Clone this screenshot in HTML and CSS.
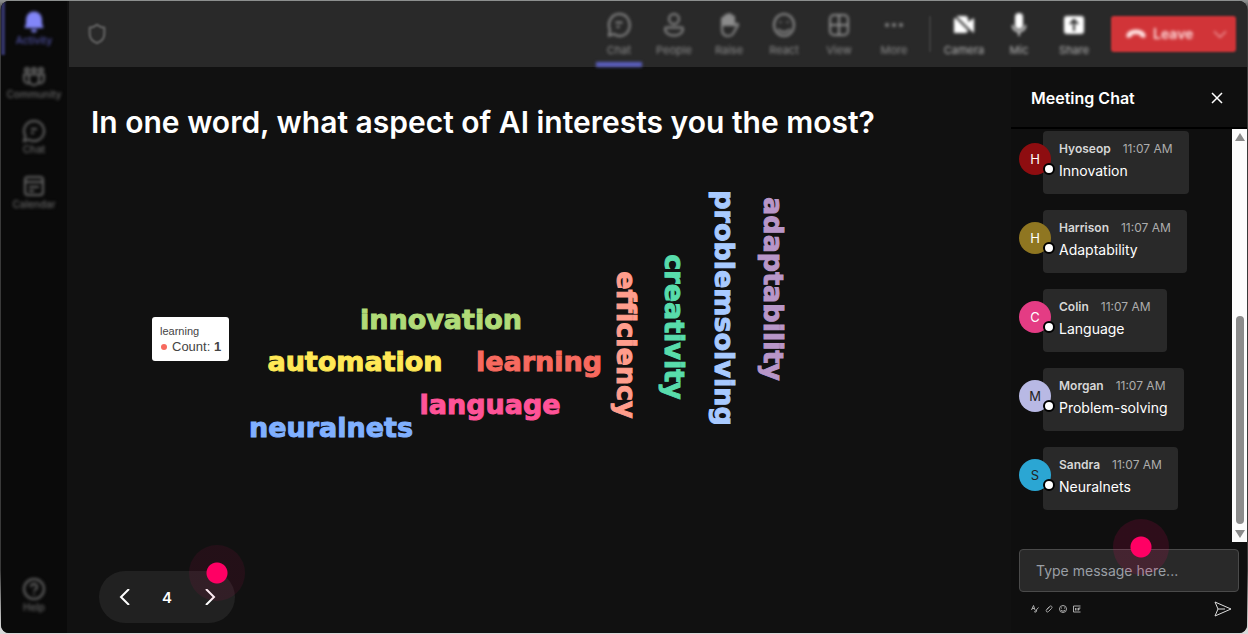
FILE: index.html
```
<!DOCTYPE html>
<html lang="en">
<head>
<meta charset="utf-8">
<title>Meeting Chat</title>
<link rel="stylesheet" href="styles.css">
</head>
<body>
<div class="app">
	<nav class="rail">
		<a class="rail-item active" href="#">
			<svg viewBox="0 0 24 24" width="24" height="24"><path d="M12 1.500a8 8 0 0 0-8 8v4l-1.500 4.500h19L20 13.500v-4a8 8 0 0 0-8-8zM9 19.500a3 3 0 0 0 6 0z" fill="currentColor"/></svg>
			<span>Activity</span>
		</a>
		<a class="rail-item" href="#">
			<svg viewBox="0 0 24 24" width="24" height="24"><circle cx="5" cy="6" r="2"/><circle cx="12" cy="6" r="2"/><circle cx="19" cy="6" r="2"/><path d="M7 10.500h10V16a5 5 0 0 1-10 0zM7 10.500H2V15a4 4 0 0 0 5.500 4M17 10.500h5V15a4 4 0 0 1-5.500 4"/></svg>
			<span>Community</span>
		</a>
		<a class="rail-item" href="#">
			<svg viewBox="0 0 24 24" width="24" height="24"><path d="M12 2a10 10 0 1 1-5 18.600L2 22l1.400-5A10 10 0 0 1 12 2zM9 10h6M9 14h3"/></svg>
			<span>Chat</span>
		</a>
		<a class="rail-item" href="#">
			<svg viewBox="0 0 24 24" width="24" height="24"><rect x="3" y="3" width="18" height="18" rx="3"/><path d="M3 8h18M7 13h10M7 17h5"/></svg>
			<span>Calendar</span>
		</a>
		<a class="rail-item help" href="#">
			<svg viewBox="0 0 24 24" width="24" height="24"><circle cx="12" cy="12" r="10"/><path d="M9 10a3 3 0 1 1 4.500 2.500c-1 .6-1.500 1-1.500 2M12 16.500v1.500"/></svg>
			<span>Help</span>
		</a>
	</nav>

	<div class="main">
		<header class="topbar">
			<svg class="shield" viewBox="0 0 24 24" width="22" height="22"><path d="M12 2c2.500 2 5 3 8 3v7c0 5-3 8-8 10-5-2-8-5-8-10V5c3 0 5.500-1 8-3z"/></svg>
			<div class="tools">
				<button class="tool selected" type="button">
					<svg viewBox="0 0 24 24" width="24" height="24"><path d="M12 1a10 11 0 1 1-5 20L2 22.500l1-5.500A10 11 0 0 1 12 1zM8.500 9.500h7M9.500 14h3"/></svg>
					<span>Chat</span>
				</button>
				<button class="tool" type="button">
					<svg viewBox="0 0 24 24" width="24" height="24"><circle cx="12" cy="6" r="5"/><path d="M4 14.500h16c1 0 1 1 1 1.500 0 4-4 6.500-9 6.500S3 20 3 16c0-.5 0-1.500 1-1.500z"/></svg>
					<span>People</span>
				</button>
				<button class="tool" type="button">
					<svg viewBox="0 0 24 24" width="24" height="24"><path d="M5 12V6a1.500 1.500 0 0 1 3 0V3.500a1.500 1.500 0 0 1 3 0V2.500a1.500 1.500 0 0 1 3 0v2a1.500 1.500 0 0 1 3 0V12z" fill="currentColor"/><path d="M5 12v4c0 4 2 7 6 7 3 0 5-1.500 6-4l4-6.800c.5-1.200-1-2-2-1.200L17 13"/></svg>
					<span>Raise</span>
				</button>
				<button class="tool" type="button">
					<svg viewBox="0 0 24 24" width="24" height="24"><ellipse cx="12" cy="12" rx="10" ry="11"/><path d="M8.500 8.500v1.500M15.500 8.500v1.500M6 16c3 4 9 4 12 0"/></svg>
					<span>React</span>
				</button>
				<button class="tool" type="button">
					<svg viewBox="0 0 24 24" width="24" height="24"><rect x="3" y="2" width="18" height="20" rx="4"/><path d="M12 2v20M3 12h18"/></svg>
					<span>View</span>
				</button>
				<button class="tool" type="button">
					<svg viewBox="0 0 24 24" width="24" height="24"><g fill="currentColor" stroke="none"><circle cx="5" cy="12" r="2"/><circle cx="12" cy="12" r="2"/><circle cx="19" cy="12" r="2"/></g></svg>
					<span>More</span>
				</button>
			</div>
			<div class="tools devices">
				<button class="tool" type="button">
					<svg viewBox="0 0 24 24" width="24" height="24"><path d="M5 3h8a3 3 0 0 1 3 3v3l6-4v15l-6-4v1a3 3 0 0 1-3 3H2V6z" fill="currentColor" stroke="none"/><path d="M2 2l20 20" stroke="#292929"/></svg>
					<span>Camera</span>
				</button>
				<button class="tool" type="button">
					<svg viewBox="0 0 24 24" width="24" height="24"><rect x="8" y="0" width="8" height="16" rx="4" fill="currentColor" stroke="none"/><path d="M5.500 12a6.500 6.500 0 0 0 13 0M12 19v4" stroke-width="1.500"/></svg>
					<span>Mic</span>
				</button>
				<button class="tool" type="button">
					<svg viewBox="0 0 24 24" width="24" height="24"><rect x="2" y="3" width="20" height="18" rx="3" fill="currentColor" stroke="none"/><path d="M12 18V7M8 11l4-4 4 4" stroke="#292929"/></svg>
					<span>Share</span>
				</button>
			</div>
			<button class="leave" type="button">
				<svg viewBox="0 0 24 24" width="22" height="22"><path d="M12 7C6 7 1.500 10 1.500 13.500c0 2 .8 2.800 2.500 2.500l2.500-.6c1-.3 1.300-1 1.200-2.400 2.600-1 6-1 8.600 0-.1 1.400.2 2.100 1.200 2.400l2.500.6c1.700.3 2.500-.5 2.500-2.500C22.500 10 18 7 12 7z" fill="currentColor"/></svg>
				<span>Leave</span>
				<svg class="caret" viewBox="0 0 24 24" width="16" height="16"><path d="M3 8l9 9 9-9"/></svg>
			</button>
		</header>

		<div class="content">
			<main class="stage">
				<h1>In one word, what aspect of AI interests you the most?</h1>
				<div class="cloud">
					<svg viewBox="0 0 800 320" width="800" height="320">
						<text x="350" y="189" color="#b0db78">innovation</text>
						<text x="264" y="231" color="#ffe856">automation</text>
						<text x="448" y="231" color="#f76a5f">learning</text>
						<text x="399" y="274" color="#ff5397">language</text>
						<text x="240" y="297" color="#80b0ff">neuralnets</text>
						<text transform="translate(526 205) rotate(90)" color="#ff9d8c">efficiency</text>
						<text transform="translate(574 187) rotate(90)" color="#58dcab">creativity</text>
						<text transform="translate(624 168) rotate(90)" color="#a8caff">problemsolving</text>
						<text transform="translate(673 149) rotate(90)" color="#b896c8">adaptability</text>
					</svg>
					<div class="tip">
						<div class="tip-title">learning</div>
						<div class="tip-row"><i></i>Count: <b>1</b></div>
					</div>
				</div>
				<div class="pager">
					<button type="button" aria-label="Previous"><svg viewBox="0 0 16 16" width="16" height="16"><path d="M13 0L5 8l8 8"/></svg></button>
					<span>4</span>
					<button type="button" aria-label="Next"><svg viewBox="0 0 16 16" width="16" height="16"><path d="M4 0l8 8-8 8"/></svg></button>
					<div class="pulse"></div>
				</div>
			</main>

			<aside class="chat">
				<div class="chat-head">
					<h2>Meeting Chat</h2>
					<button type="button" aria-label="Close"><svg viewBox="0 0 12 12" width="12" height="12"><path d="M1 1l10 10M11 1L1 11"/></svg></button>
				</div>
				<div class="chat-body">
					<ul class="messages">
						<li><div class="avatar red">H</div><div class="bubble"><b>Hyoseop</b><time>11:07 AM</time><p>Innovation</p></div></li>
						<li><div class="avatar olive">H</div><div class="bubble"><b>Harrison</b><time>11:07 AM</time><p>Adaptability</p></div></li>
						<li><div class="avatar pink">C</div><div class="bubble"><b>Colin</b><time>11:07 AM</time><p>Language</p></div></li>
						<li><div class="avatar lilac">M</div><div class="bubble"><b>Morgan</b><time>11:07 AM</time><p>Problem-solving</p></div></li>
						<li><div class="avatar blue">S</div><div class="bubble"><b>Sandra</b><time>11:07 AM</time><p>Neuralnets</p></div></li>
					</ul>
					<div class="scrollbar">
						<svg viewBox="0 0 10 8" width="10" height="8"><path d="M5 0l5 8H0z"/></svg>
						<div class="track"><div class="thumb"></div></div>
						<svg viewBox="0 0 10 8" width="10" height="8"><path d="M0 0h10L5 8z"/></svg>
					</div>
				</div>
				<form class="composer">
					<input type="text" placeholder="Type message here..." aria-label="Message">
					<div class="pulse"></div>
					<div class="composer-tools">
						<button type="button" aria-label="Format"><svg viewBox="0 0 16 16" width="8" height="8"><path d="M1 10L5 1l3 9M2 7h5M7 14l8-9M7 14c3 1 5-1 4-4"/></svg></button>
						<button type="button" aria-label="Attach"><svg viewBox="0 0 16 16" width="8" height="8"><path d="M3 9l6-6c3-3 7 1 4 4l-6 6c-3 3-6-1-4-3l6-6"/></svg></button>
						<button type="button" aria-label="Emoji"><svg viewBox="0 0 16 16" width="8" height="8"><circle cx="8" cy="8" r="7"/><path d="M5 5v2M11 5v2M4 10c2 3 6 3 8 0"/></svg></button>
						<button type="button" aria-label="GIF"><svg viewBox="0 0 16 16" width="8" height="8"><path d="M15 2H1v12h14M5 6v5M8 6v5M15 6h-4v5M11 8h3"/></svg></button>
						<button class="send" type="submit" aria-label="Send"><svg viewBox="0 0 18 16" width="18" height="16"><path d="M1 1l16 7-16 7 3-7zM4 8h7"/></svg></button>
					</div>
				</form>
			</aside>
		</div>
	</div>
</div>
</body>
</html>
```

FILE: styles.css
```
* {
	box-sizing: border-box;
}

body {
	margin: 0;
	padding: 1px;
	background: linear-gradient(#8c8f8e 0, #8c8f8e 1px, #3a3a3a 10px, #3a3a3a 90%, #d8d8d8 99%);
	font-family: Inter, "Liberation Sans", sans-serif;
	color: #fff;
}

button {
	border: 0;
	padding: 0;
	background: none;
	color: inherit;
	font: inherit;
}

svg {
	display: block;
	fill: none;
	stroke: currentColor;
	stroke-width: 2;
}

.app {
	display: flex;
	height: calc(100vh - 2px);
	border-radius: 8px;
	background: #111;
	overflow: hidden;
}

/* left navigation */
.rail {
	display: flex;
	flex-direction: column;
	width: 66px;
	padding-bottom: 10px;
	background: #0a0a0a;
}

.rail-item {
	display: flex;
	flex-direction: column;
	align-items: center;
	height: 55px;
	padding-top: 9px;
	color: #666;
	font-size: 10px;
	line-height: 12px;
	font-weight: 500;
	text-decoration: none;
	filter: blur(1px);
}

.rail-item.active {
	height: 54px;
	border-left: 4px solid #34356a;
	padding-right: 4px;
	color: #4f51a3;
}

.rail-item.active svg {
	color: #8286f8;
	stroke: none;
}

.rail-item.help {
	margin-top: auto;
}

.rail-item span,
.rail-item svg,
.tools,
.leave span,
.leave svg {
	filter: blur(1px);
}

.main {
	display: flex;
	flex: 1;
	flex-direction: column;
	min-width: 0;
}

/* meeting toolbar */
.topbar {
	display: flex;
	align-items: center;
	height: 66px;
	margin-left: 2px;
	padding: 0 11px 0 17px;
	background: #292929;
}

.shield {
	color: #6c6c6c;
	filter: blur(1px);
}

.tools {
	display: flex;
	gap: 9px;
	height: 66px;
	margin-left: auto;
	color: #8c8c8c;
}

.tool {
	display: flex;
	flex-direction: column;
	align-items: center;
	gap: 4px;
	width: 46px;
	padding-top: 12px;
	font-size: 11px;
	line-height: 18px;
	filter: blur(1px);
}

.tool.selected {
	border-bottom: 5px solid #5b5fc0;
}

.devices {
	align-self: center;
	margin-left: 12px;
	padding-left: 12px;
	background: linear-gradient(#3d3d3d, #3d3d3d) no-repeat 0 center / 2px 36px;
	color: #b4b4b4;
}

.devices svg {
	color: #fff;
}

.leave {
	display: flex;
	align-items: center;
	gap: 6px;
	width: 125px;
	height: 36px;
	margin-left: 14px;
	padding: 0 8px 0 14px;
	border-radius: 3px;
	background: #d13438;
	color: #ffe0e0;
	font-size: 14px;
	line-height: 20px;
	font-weight: 600;
	filter: blur(1px);
}

.leave svg {
	stroke-width: 0;
}

.leave .caret {
	margin-left: auto;
	color: #f0a0a2;
	stroke-width: 2;
}

.content {
	display: flex;
	flex: 1;
	min-height: 0;
}

/* question and word cloud */
.stage {
	display: flex;
	flex: 1;
	flex-direction: column;
	min-width: 0;
	padding: 37px 24px 10px;
}

.stage h1 {
	margin: 0;
	font-size: 30px;
	line-height: 36px;
	font-weight: 600;
	white-space: nowrap;
}

.cloud {
	position: relative;
}

.cloud text {
	font-family: "Arial Black", "DejaVu Sans", sans-serif;
	font-size: 27px;
	font-weight: 900;
	font-variant-ligatures: none;
	text-anchor: middle;
	fill: currentColor;
	stroke-width: 1;
}

.tip {
	position: absolute;
	left: 61px;
	top: 177px;
	padding: 6px 8px;
	border-radius: 3px;
	background: #fff;
	color: #444;
	font-family: "Liberation Sans", Arial, sans-serif;
	white-space: nowrap;
}

.tip-title {
	font-size: 11px;
	line-height: 16px;
}

.tip-row {
	font-size: 13px;
	line-height: 16px;
}

.tip-row i {
	display: inline-block;
	width: 6px;
	height: 6px;
	margin: 0 5px 1px 1px;
	border-radius: 50%;
	background: #f76a5f;
}

.pager {
	position: relative;
	display: flex;
	align-items: center;
	justify-content: space-between;
	width: 136px;
	height: 52px;
	margin: auto 0 0 8px;
	padding: 0 17px;
	border-radius: 26px;
	background: #212121;
	font-size: 15px;
	font-weight: 600;
}

.pulse {
	position: absolute;
	width: 56px;
	height: 56px;
	border-radius: 50%;
	background: radial-gradient(circle, #ff0064 10px, rgba(255, 0, 100, 0.13) 11px);
	pointer-events: none;
}

.pager .pulse {
	top: -26px;
	right: -10px;
	background: radial-gradient(circle, #ff0064 10px, rgba(255, 0, 100, 0.08) 11px);
}

/* chat panel */
.chat {
	display: flex;
	flex-direction: column;
	width: 236px;
	background: #0f0f0f;
}

.chat-head {
	display: flex;
	align-items: center;
	justify-content: space-between;
	height: 62px;
	padding: 2px 24px 0 20px;
	border-bottom: 2px solid #000;
}

.chat-head h2 {
	margin: 0;
	font-size: 16px;
	line-height: 24px;
	font-weight: 600;
}

.chat-head svg {
	stroke-width: 1.5;
}

.chat-body {
	display: flex;
	flex: 1;
	min-height: 0;
}

.messages {
	display: flex;
	flex: 1;
	flex-direction: column;
	gap: 16px;
	margin: 0;
	padding: 2px 8px;
	list-style: none;
}

.messages li {
	display: flex;
}

.avatar {
	position: relative;
	z-index: 1;
	width: 32px;
	height: 32px;
	margin: 12px -8px 0 0;
	border-radius: 50%;
	font-size: 13px;
	line-height: 32px;
	text-align: center;
}

.avatar::after {
	content: "";
	position: absolute;
	right: -4px;
	bottom: 0;
	box-sizing: border-box;
	width: 12px;
	height: 12px;
	border: 2px solid #000;
	border-radius: 50%;
	background: #fff;
}

.red {
	background: #8e0d10;
}

.olive {
	background: #8f7621;
}

.pink {
	background: #e43c84;
}

.lilac {
	background: #b8b9e4;
	color: #222;
}

.blue {
	background: #2ba6d3;
	color: #222;
}

.bubble {
	height: 63px;
	padding: 8px 16px;
	border-radius: 4px;
	background: #292929;
	font-size: 12px;
	line-height: 20px;
}

.bubble b {
	margin-right: 12px;
	color: #d6d6d6;
	font-weight: 600;
}

.bubble time {
	color: #adadad;
}

.bubble p {
	margin: 2px 0 0;
	font-size: 14px;
}

.scrollbar {
	display: flex;
	flex-direction: column;
	align-items: center;
	gap: 4px;
	width: 15px;
	padding: 4px 0;
	background: #fcfcfc;
}

.scrollbar svg {
	fill: #8b8b8b;
	stroke: none;
}

.track {
	display: flex;
	flex: 1;
	align-items: flex-end;
	padding-bottom: 2px;
}

.thumb {
	width: 8px;
	height: 55%;
	border-radius: 4px;
	background: #8b8b8b;
}

.composer {
	position: relative;
	padding: 7px 8px 16px;
}

.composer input {
	display: block;
	width: 100%;
	height: 43px;
	padding: 0 16px;
	border: 1px solid #4a4a4a;
	border-radius: 4px;
	background: #292929;
	color: #fff;
	font: 14px/20px Inter, sans-serif;
}

.composer input::placeholder {
	color: #9a9fa5;
}

.composer .pulse {
	top: -23px;
	left: 50%;
	margin-left: -16px;
}

.composer-tools {
	display: flex;
	align-items: center;
	gap: 6px;
	height: 16px;
	margin: 9px 7px 0 12px;
	color: #aaa;
}

.composer-tools .send {
	margin-left: auto;
	color: #ddd;
}

.send svg {
	stroke-width: 1;
}
```
